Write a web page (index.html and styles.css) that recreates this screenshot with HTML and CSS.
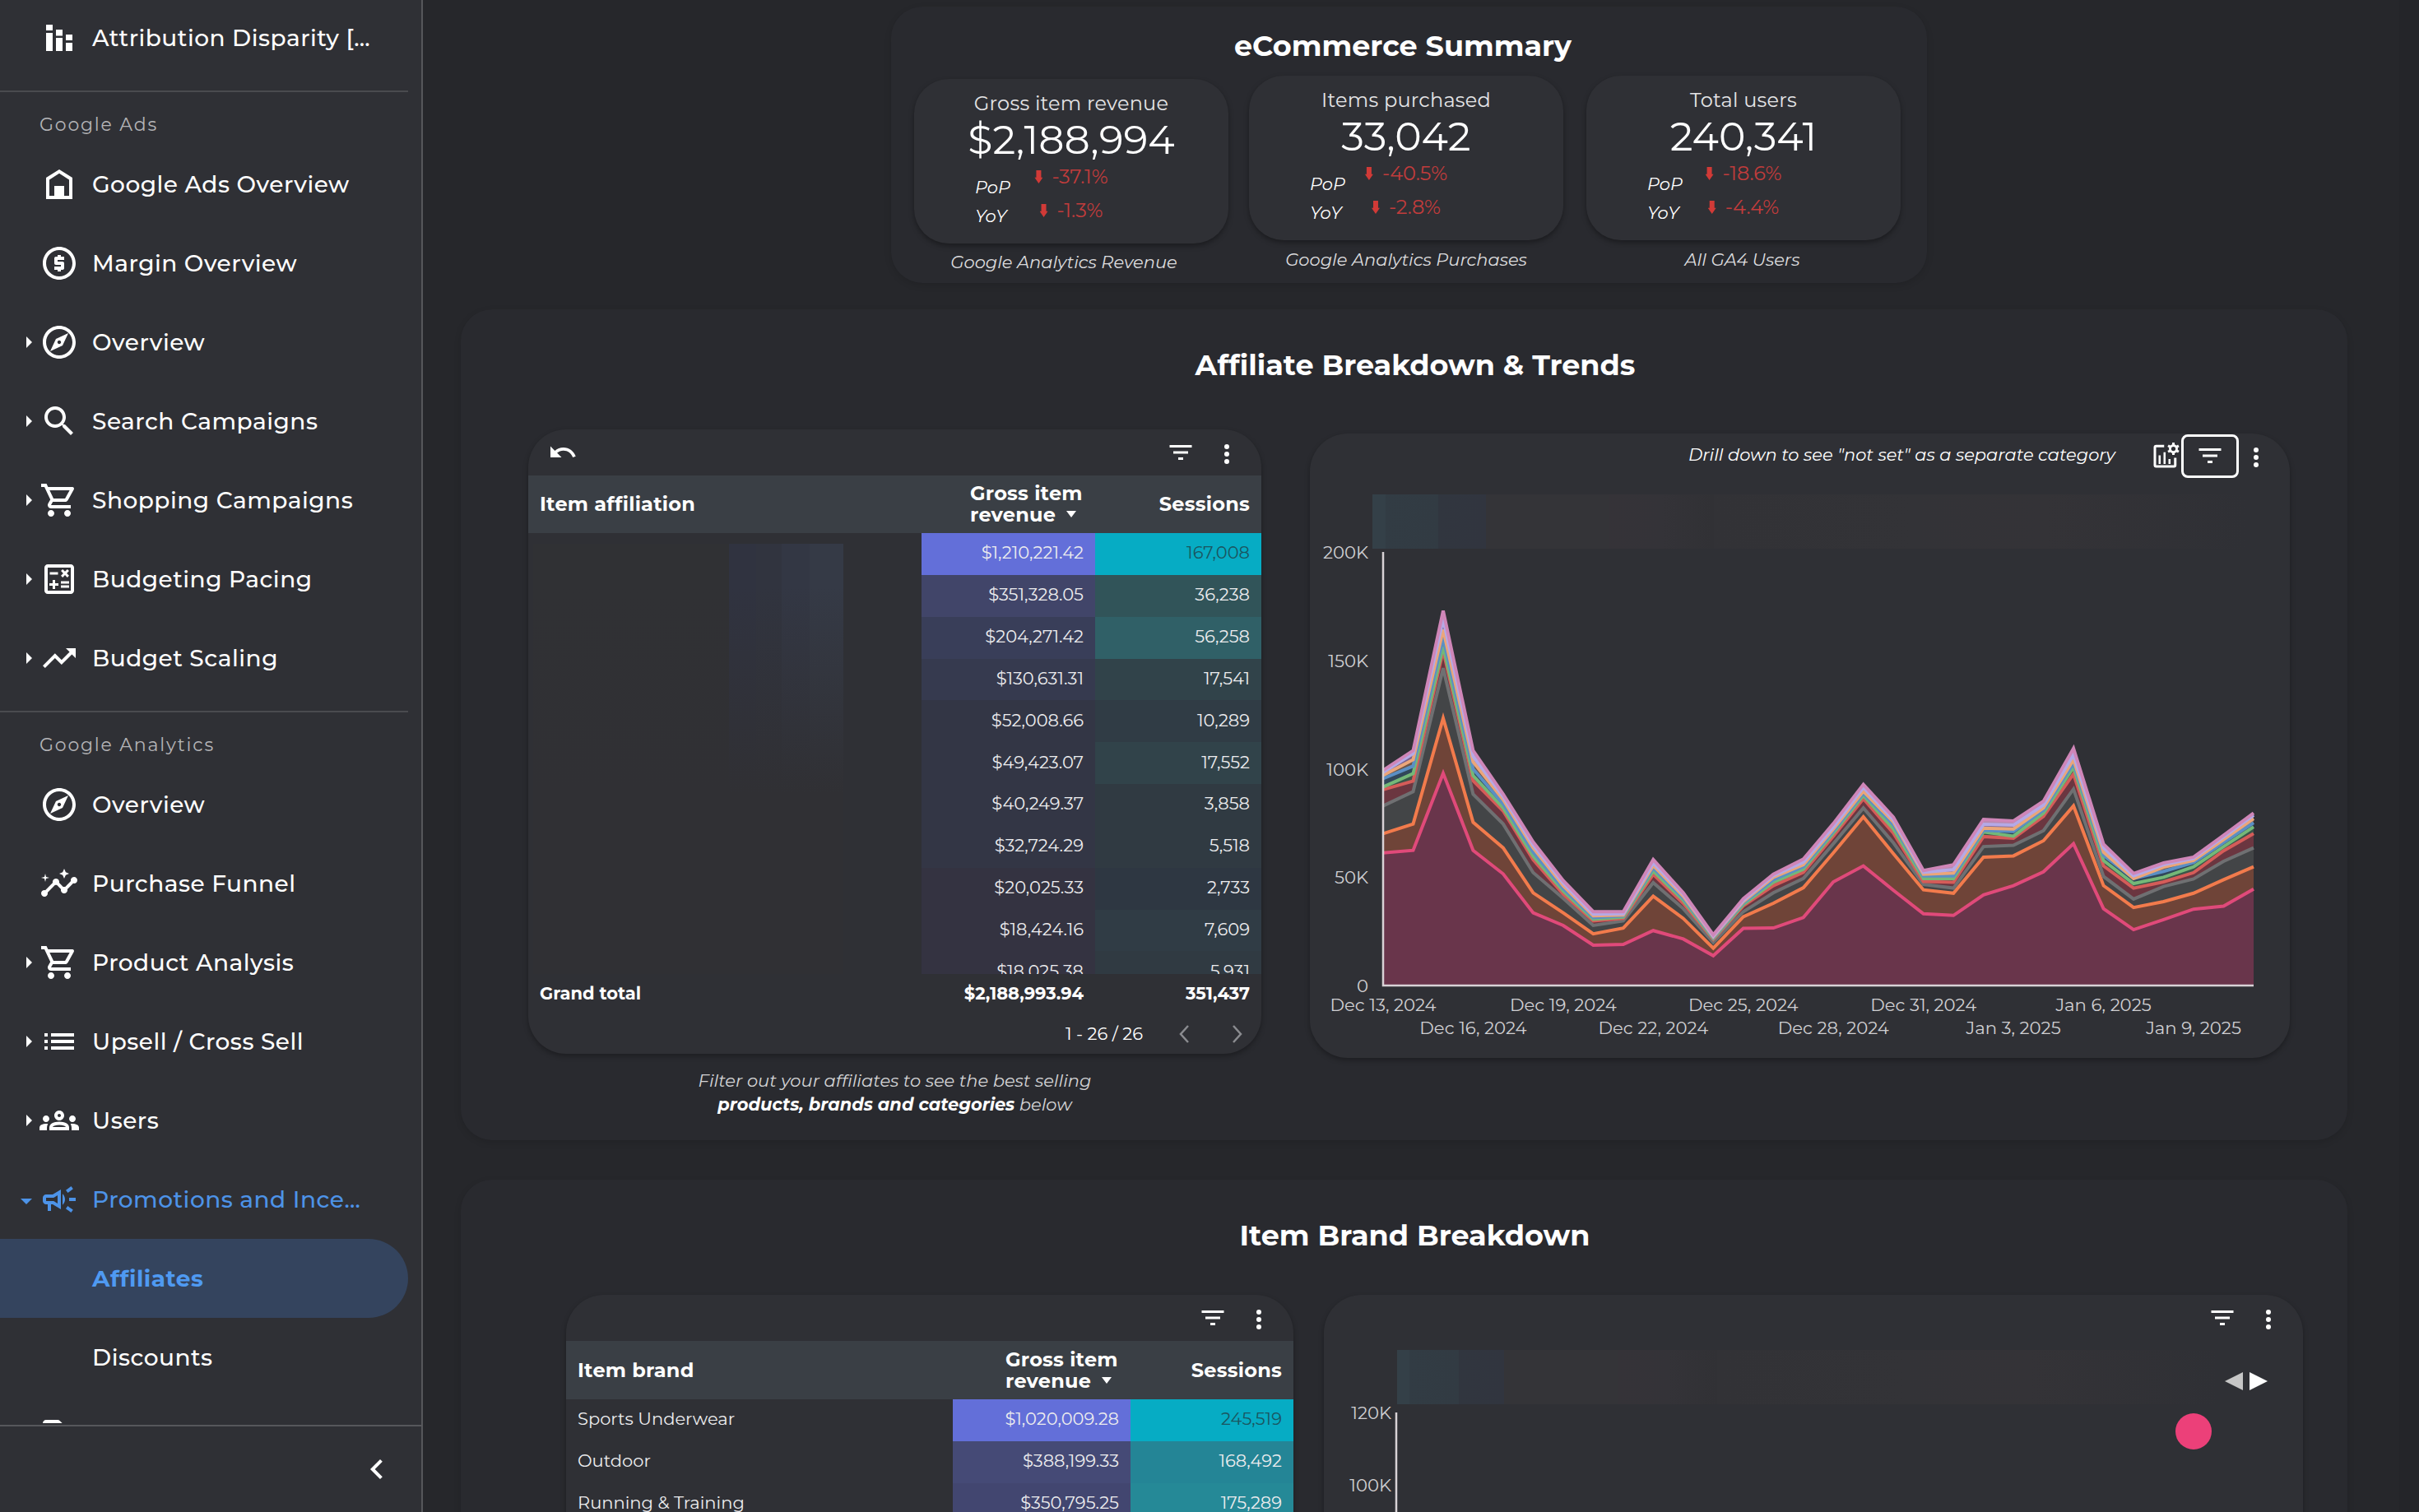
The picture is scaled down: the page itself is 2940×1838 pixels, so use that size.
FILE: index.html
```html
<!DOCTYPE html>
<html lang="en">
<head>
    <meta charset="UTF-8">
    <meta name="viewport" content="width=device-width, initial-scale=1.0">
    <title>Affiliates</title>
    <link rel="stylesheet" href="styles.css">
</head>
<body>

<!-- Icon set -->
<svg class="icon-defs">
    <symbol id="i-bars" viewBox="0 0 24 24"><path d="M4 4h4v3.500H4zM4 9h4v11H4zM10 7h4v3.700h-4zM10 12h4v8h-4zM16 10h4v3.500h-4zM16 15h4v5h-4z"/></symbol>
    <symbol id="i-home" viewBox="0 0 24 24"><path fill-rule="evenodd" d="M4 21V8l8-5 8 5v13H4zM6 19h3v-6h6v6h3V9.2l-6-3.8-6 3.8V19z"/></symbol>
    <symbol id="i-paid" viewBox="0 0 24 24"><path d="M12 2C6.48 2 2 6.48 2 12s4.48 10 10 10 10-4.48 10-10S17.52 2 12 2zm0 18c-4.41 0-8-3.59-8-8s3.59-8 8-8 8 3.59 8 8-3.59 8-8 8zM11 17h2v-1h1c.55 0 1-.45 1-1v-3c0-.55-.45-1-1-1h-3v-1h4V8h-2V7h-2v1h-1c-.55 0-1 .45-1 1v3c0 .55.45 1 1 1h3v1H9v2h2v1z"/></symbol>
    <symbol id="i-explore" viewBox="0 0 24 24"><path d="M12 2C6.48 2 2 6.48 2 12s4.48 10 10 10 10-4.48 10-10S17.52 2 12 2zm0 18c-4.41 0-8-3.59-8-8s3.59-8 8-8 8 3.59 8 8-3.59 8-8 8zm-5.5-2.5l7.51-3.49L17.5 6.5 9.99 9.99 6.5 17.5zm5.5-6.6c.61 0 1.1.49 1.1 1.1s-.49 1.1-1.1 1.1-1.1-.49-1.1-1.1.49-1.1 1.1-1.1z"/></symbol>
    <symbol id="i-search" viewBox="0 0 24 24"><path d="M15.5 14h-.79l-.28-.27C15.41 12.59 16 11.11 16 9.5 16 5.91 13.09 3 9.5 3S3 5.91 3 9.5 5.91 16 9.5 16c1.61 0 3.09-.59 4.23-1.57l.27.28v.79l5 4.99L20.49 19l-4.99-5zm-6 0C7.01 14 5 11.99 5 9.5S7.01 5 9.5 5 14 7.01 14 9.5 11.99 14 9.5 14z"/></symbol>
    <symbol id="i-cart" viewBox="0 0 24 24"><path d="M15.55 13c.75 0 1.41-.41 1.75-1.03l3.58-6.49c.37-.66-.11-1.48-.87-1.48H5.21l-.94-2H1v2h2l3.6 7.59-1.35 2.44C4.52 15.37 5.48 17 7 17h12v-2H7l1.1-2h7.45zM6.16 6h12.15l-2.76 5H8.53L6.16 6zM7 18c-1.1 0-1.99.9-1.99 2S5.9 22 7 22s2-.9 2-2-.9-2-2-2zm10 0c-1.1 0-1.99.9-1.99 2s.89 2 1.99 2 2-.9 2-2-.9-2-2-2z"/></symbol>
    <symbol id="i-calc" viewBox="0 0 24 24"><path d="M19 3H5c-1.1 0-2 .9-2 2v14c0 1.1.9 2 2 2h14c1.1 0 2-.9 2-2V5c0-1.1-.9-2-2-2zm0 16H5V5h14v14zM6.25 7.72h5v1.5h-5zM13 15.75h5v1.5h-5zM13 13.25h5v1.5h-5zM8 18h1.5v-2h2v-1.5h-2v-2H8v2H6V16h2zM14.09 10.95l1.41-1.41 1.41 1.41 1.06-1.06-1.41-1.42 1.41-1.41L16.91 6 15.5 7.41 14.09 6l-1.06 1.06 1.41 1.41-1.41 1.42z"/></symbol>
    <symbol id="i-trend" viewBox="0 0 24 24"><path d="M16 6l2.29 2.29-4.88 4.88-4-4L2 16.59 3.41 18l6-6 4 4 6.3-6.29L22 12V6z"/></symbol>
    <symbol id="i-insights" viewBox="0 0 24 24"><path d="M21 8c-1.45 0-2.26 1.44-1.93 2.51l-3.55 3.56c-.3-.09-.74-.09-1.04 0l-2.55-2.55C12.27 10.45 11.46 9 10 9c-1.45 0-2.27 1.44-1.93 2.52l-4.56 4.55C2.44 15.74 1 16.55 1 18c0 1.1.9 2 2 2 1.45 0 2.26-1.44 1.93-2.51l4.55-4.56c.3.09.74.09 1.04 0l2.55 2.55C12.73 16.55 13.54 18 15 18c1.45 0 2.27-1.44 1.93-2.52l3.56-3.55C21.56 12.26 23 11.45 23 10c0-1.1-.9-2-2-2zM15 9l.94-2.07L18 6l-2.06-.93L15 3l-.92 2.07L12 6l2.08.93zM3.5 11L4 9l2-.5L4 8l-.5-2L3 8l-2 .5L3 9z"/></symbol>
    <symbol id="i-list" viewBox="0 0 24 24"><path d="M3 13h2v-2H3v2zm0 4h2v-2H3v2zm0-8h2V7H3v2zm4 4h14v-2H7v2zm0 4h14v-2H7v2zM7 7v2h14V7H7z"/></symbol>
    <symbol id="i-groups" viewBox="0 0 24 24"><path d="M4 13c1.1 0 2-.9 2-2s-.9-2-2-2-2 .9-2 2 .9 2 2 2zm1.13 1.1c-.37-.06-.74-.1-1.13-.1-.99 0-1.93.21-2.78.58C.48 14.9 0 15.62 0 16.43V18h4.5v-1.61c0-.83.23-1.61.63-2.29zM20 13c1.1 0 2-.9 2-2s-.9-2-2-2-2 .9-2 2 .9 2 2 2zm4 3.43c0-.81-.48-1.53-1.22-1.85-.85-.37-1.79-.58-2.78-.58-.39 0-.76.04-1.13.1.4.68.63 1.46.63 2.29V18H24v-1.57zM16.24 13.65c-1.17-.52-2.61-.9-4.24-.9s-3.07.39-4.24.9C6.68 14.13 6 15.21 6 16.39V18h12v-1.61c0-1.18-.68-2.26-1.76-2.74zM8.07 16c.09-.23.13-.39.91-.69.97-.38 1.99-.56 3.02-.56s2.05.18 3.02.56c.77.3.81.46.91.69H8.07zM12 8c.55 0 1 .45 1 1s-.45 1-1 1-1-.45-1-1 .45-1 1-1m0-2c-1.66 0-3 1.34-3 3s1.34 3 3 3 3-1.34 3-3-1.34-3-3-3z"/></symbol>
    <symbol id="i-campaign" viewBox="0 0 24 24"><path d="M18 11v2h4v-2h-4zm-2 6.61c.96.71 2.21 1.65 3.2 2.39.4-.53.8-1.07 1.2-1.6-.99-.74-2.24-1.68-3.2-2.4-.4.54-.8 1.08-1.2 1.61zM20.4 5.6c-.4-.53-.8-1.07-1.2-1.6-.99.74-2.24 1.68-3.2 2.4.4.53.8 1.07 1.2 1.6.96-.72 2.21-1.65 3.2-2.4zM4 9c-1.1 0-2 .9-2 2v2c0 1.1.9 2 2 2h1v4h2v-4h1l5 3V6L8 9H4zm5.03 1.71L11 9.53v4.94l-1.97-1.18-.48-.29H4v-2h4.55l.48-.29zM15.5 12c0-1.33-.58-2.53-1.5-3.35v6.69c.92-.81 1.5-2.01 1.5-3.34z"/></symbol>
    <symbol id="i-tag" viewBox="0 0 24 24"><path d="M21.41 11.58l-9-9C12.05 2.22 11.55 2 11 2H4c-1.1 0-2 .9-2 2v7c0 .55.22 1.05.59 1.42l9 9c.36.36.86.58 1.41.58s1.05-.22 1.41-.59l7-7c.37-.36.59-.86.59-1.41s-.23-1.06-.59-1.42zM13 20.01L4 11V4h7v-.01l9 9-7 7.02z"/></symbol>
    <symbol id="i-chevron" viewBox="0 0 24 24"><path d="M15.41 7.41L14 6l-6 6 6 6 1.41-1.41L10.83 12z"/></symbol>
    <symbol id="i-undo" viewBox="0 0 24 24"><path d="M12.5 8c-2.65 0-5.05.99-6.9 2.6L2 7v9h9l-3.62-3.62c1.39-1.16 3.16-1.88 5.12-1.88 3.54 0 6.55 2.31 7.6 5.5l2.37-.78C21.08 11.03 17.15 8 12.5 8z"/></symbol>
    <symbol id="i-filter" viewBox="0 0 24 24"><path d="M10 18h4v-2h-4v2zM3 6v2h18V6H3zm3 7h12v-2H6v2z"/></symbol>
    <symbol id="i-more" viewBox="0 0 24 24"><circle cx="12" cy="6" r="2"/><circle cx="12" cy="12" r="2"/><circle cx="12" cy="18" r="2"/></symbol>
    <symbol id="i-chart-edit" viewBox="0 0 24 24">
        <path d="M11.500 3.500H5Q4 3.500 4 4.500v14.500q0 1 1 1h14.500q1 0 1-1V13" fill="none" stroke="currentColor" stroke-width="2"/>
        <path d="M7 11h1.700v7H7zM11 8.500h1.700V18H11zM15 14h1.700v4H15z"/>
        <circle cx="19" cy="5.700" r="2.700" fill="none" stroke="currentColor" stroke-width="1.900"/>
        <path d="M19 .7v10M14.700 3.200l8.600 5M14.700 8.200l8.600-5" fill="none" stroke="currentColor" stroke-width="2" stroke-dasharray="1.800 6.300 1.800"/>
    </symbol>
</svg>

<div class="layout">
    <aside class="sidebar">
        <nav class="nav">
            <a class="nav-item"><span class="caret"></span><svg class="icon"><use href="#i-bars"/></svg><span>Attribution Disparity […</span></a>

            <div class="nav-section">Google Ads</div>
            <a class="nav-item"><span class="caret"></span><svg class="icon"><use href="#i-home"/></svg><span>Google Ads Overview</span></a>
            <a class="nav-item"><span class="caret"></span><svg class="icon"><use href="#i-paid"/></svg><span>Margin Overview</span></a>
            <a class="nav-item"><span class="caret closed"></span><svg class="icon"><use href="#i-explore"/></svg><span>Overview</span></a>
            <a class="nav-item"><span class="caret closed"></span><svg class="icon"><use href="#i-search"/></svg><span>Search Campaigns</span></a>
            <a class="nav-item"><span class="caret closed"></span><svg class="icon"><use href="#i-cart"/></svg><span>Shopping Campaigns</span></a>
            <a class="nav-item"><span class="caret closed"></span><svg class="icon"><use href="#i-calc"/></svg><span>Budgeting Pacing</span></a>
            <a class="nav-item"><span class="caret closed"></span><svg class="icon"><use href="#i-trend"/></svg><span>Budget Scaling</span></a>

            <div class="nav-section">Google Analytics</div>
            <a class="nav-item"><span class="caret"></span><svg class="icon"><use href="#i-explore"/></svg><span>Overview</span></a>
            <a class="nav-item"><span class="caret"></span><svg class="icon"><use href="#i-insights"/></svg><span>Purchase Funnel</span></a>
            <a class="nav-item"><span class="caret closed"></span><svg class="icon"><use href="#i-cart"/></svg><span>Product Analysis</span></a>
            <a class="nav-item"><span class="caret closed"></span><svg class="icon"><use href="#i-list"/></svg><span>Upsell / Cross Sell</span></a>
            <a class="nav-item"><span class="caret closed"></span><svg class="icon"><use href="#i-groups"/></svg><span>Users</span></a>
            <a class="nav-item open"><span class="caret opened"></span><svg class="icon"><use href="#i-campaign"/></svg><span>Promotions and Ince…</span></a>
            <a class="nav-item sub active"><span>Affiliates</span></a>
            <a class="nav-item sub"><span>Discounts</span></a>
            <a class="nav-item"><span class="caret"></span><svg class="icon"><use href="#i-tag"/></svg></a>
        </nav>
        <div class="sidebar-footer">
            <svg class="icon"><use href="#i-chevron"/></svg>
        </div>
    </aside>

    <main class="report">
        <!-- eCommerce summary -->
        <section class="panel summary">
            <h2>eCommerce Summary</h2>
            <div class="kpis">
                <div class="kpi-col first">
                    <div class="kpi">
                        <div class="kpi-label">Gross item revenue</div>
                        <div class="kpi-value">$2,188,994</div>
                        <div class="compare">
                            <div class="periods"><i>PoP</i><i>YoY</i></div>
                            <div class="deltas"><span><b class="down"></b>-37.1%</span><span><b class="down"></b>-1.3%</span></div>
                        </div>
                    </div>
                    <div class="kpi-note">Google Analytics Revenue</div>
                </div>
                <div class="kpi-col">
                    <div class="kpi">
                        <div class="kpi-label">Items purchased</div>
                        <div class="kpi-value">33,042</div>
                        <div class="compare">
                            <div class="periods"><i>PoP</i><i>YoY</i></div>
                            <div class="deltas"><span><b class="down"></b>-40.5%</span><span><b class="down"></b>-2.8%</span></div>
                        </div>
                    </div>
                    <div class="kpi-note">Google Analytics Purchases</div>
                </div>
                <div class="kpi-col last">
                    <div class="kpi">
                        <div class="kpi-label">Total users</div>
                        <div class="kpi-value">240,341</div>
                        <div class="compare">
                            <div class="periods"><i>PoP</i><i>YoY</i></div>
                            <div class="deltas"><span><b class="down"></b>-18.6%</span><span><b class="down"></b>-4.4%</span></div>
                        </div>
                    </div>
                    <div class="kpi-note">All GA4 Users</div>
                </div>
            </div>
        </section>

        <!-- Affiliates -->
        <section class="panel affiliates">
            <h2>Affiliate Breakdown &amp; Trends</h2>
            <div class="panel-row">
                <div class="table-col">
                    <div class="card table-card">
                        <div class="toolbar">
                            <svg class="tool"><use href="#i-undo"/></svg>
                            <span class="spacer"></span>
                            <svg class="tool"><use href="#i-filter"/></svg>
                            <svg class="tool more"><use href="#i-more"/></svg>
                        </div>
                        <div class="row head">
                            <div>Item affiliation</div>
                            <div class="num"><span class="sorted">Gross item<br>revenue<b class="sort"></b></span></div>
                            <div class="num">Sessions</div>
                        </div>
                        <div class="rows">
                            <div class="row"><div></div><div class="num g1">$1,210,221.42</div><div class="num s1">167,008</div></div>
                            <div class="row"><div></div><div class="num g2">$351,328.05</div><div class="num s2">36,238</div></div>
                            <div class="row"><div></div><div class="num g3">$204,271.42</div><div class="num s3">56,258</div></div>
                            <div class="row"><div></div><div class="num g4">$130,631.31</div><div class="num s4">17,541</div></div>
                            <div class="row"><div></div><div class="num g5">$52,008.66</div><div class="num s5">10,289</div></div>
                            <div class="row"><div></div><div class="num g5">$49,423.07</div><div class="num s4">17,552</div></div>
                            <div class="row"><div></div><div class="num g5">$40,249.37</div><div class="num s6">3,858</div></div>
                            <div class="row"><div></div><div class="num g5">$32,724.29</div><div class="num s6">5,518</div></div>
                            <div class="row"><div></div><div class="num g6">$20,025.33</div><div class="num s7">2,733</div></div>
                            <div class="row"><div></div><div class="num g6">$18,424.16</div><div class="num s5">7,609</div></div>
                            <div class="row"><div></div><div class="num g6">$18,025.38</div><div class="num s6">5,931</div></div>
                            <div class="mosaic"></div>
                        </div>
                        <div class="row total">
                            <div>Grand total</div>
                            <div class="num">$2,188,993.94</div>
                            <div class="num">351,437</div>
                        </div>
                        <div class="pager">
                            <span>1 - 26 / 26</span>
                            <svg class="page-arrow" viewBox="0 0 14 24"><path d="M12 2L3 12l9 10"/></svg>
                            <svg class="page-arrow" viewBox="0 0 14 24"><path d="M2 2l9 10-9 10"/></svg>
                        </div>
                    </div>
                    <p class="hint">Filter out your affiliates to see the best selling<br><b>products, brands and categories</b> below</p>
                </div>

                <div class="card chart-card">
                    <div class="toolbar chart-toolbar">
                        <span class="drill">Drill down to see "not set" as a separate category</span>
                        <svg class="tool"><use href="#i-chart-edit"/></svg>
                        <span class="focus-box"><svg class="tool"><use href="#i-filter"/></svg></span>
                        <svg class="tool more"><use href="#i-more"/></svg>
                    </div>
                    <div class="legend-strip"></div>
                    <svg class="chart" id="trend" viewBox="0 0 1191 620"></svg>
                </div>
            </div>
        </section>

        <!-- Brands -->
        <section class="panel brands">
            <h2>Item Brand Breakdown</h2>
            <div class="panel-row">
                <div class="card table-card">
                    <div class="toolbar">
                        <span class="spacer"></span>
                        <svg class="tool"><use href="#i-filter"/></svg>
                        <svg class="tool more"><use href="#i-more"/></svg>
                    </div>
                    <div class="row head">
                        <div>Item brand</div>
                        <div class="num"><span class="sorted">Gross item<br>revenue<b class="sort"></b></span></div>
                        <div class="num">Sessions</div>
                    </div>
                    <div class="row"><div>Sports Underwear</div><div class="num g1">$1,020,009.28</div><div class="num s1">245,519</div></div>
                    <div class="row"><div>Outdoor</div><div class="num b2">$388,199.33</div><div class="num t2">168,492</div></div>
                    <div class="row"><div>Running &amp; Training</div><div class="num b3">$350,795.25</div><div class="num t3">175,289</div></div>
                </div>
                <div class="card chart-card">
                    <div class="toolbar">
                        <span class="spacer"></span>
                        <svg class="tool"><use href="#i-filter"/></svg>
                        <svg class="tool more"><use href="#i-more"/></svg>
                    </div>
                    <div class="legend-row">
                        <div class="legend-strip"></div>
                        <svg class="legend-nav" viewBox="0 0 52 22"><path class="prev" d="M22 0v22L0 11z"/><path d="M30 0v22l22-11z"/></svg>
                    </div>
                    <svg class="bubble" viewBox="0 0 1190 200">
                        <path class="axis" d="M88 10V200"/>
                        <text x="82" y="18" text-anchor="end">120K</text>
                        <text x="82" y="106" text-anchor="end">100K</text>
                        <circle cx="1057" cy="33" r="22" fill="#ec4079"/>
                    </svg>
                </div>
            </div>
        </section>
    </main>
    <div class="scroll-track"></div>
</div>

<script src="chart.js"></script>
</body>
</html>
```
FILE: styles.css
```css
* {
    box-sizing: border-box;
}

body {
    margin: 0;
    background-color: #26272b;
    color: #fff;
    font-family: "Montserrat", "Inter", sans-serif;
    font-size: 21px;
}

.icon-defs {
    display: none;
}

svg {
    fill: currentColor;
    flex: none;
}

.layout {
    display: flex;
    height: 1838px;
    overflow: hidden;
}

/* Sidebar */
.sidebar {
    width: 514px;
    flex: none;
    display: flex;
    flex-direction: column;
    background-color: #2f3035;
    border-right: 2px solid #56575b;
}

.nav {
    height: 1730px;
    overflow: hidden;
}

.nav-item {
    display: flex;
    align-items: center;
    height: 96px;
    width: 496px;
    font-size: 28px;
    font-weight: 500;
    letter-spacing: 0.5px;
    white-space: nowrap;
}

.nav-item:first-child {
    margin-top: -2px;
}

.nav-item .icon {
    margin-right: 16px;
}

.icon {
    width: 48px;
    height: 48px;
}

.nav-item.sub {
    padding-left: 112px;
}

.nav-item.open {
    color: #4d93e8;
}

.nav-item.active {
    background-color: #34445e;
    border-radius: 0 48px 48px 0;
    color: #4f9af2;
    font-weight: 700;
}

.nav-section {
    width: 496px;
    height: 66px;
    margin-top: 16px;
    padding: 26px 0 0 48px;
    border-top: 2px solid #4a4b4f;
    color: #b4b4b7;
    font-size: 22px;
    line-height: 28px;
    letter-spacing: 1.8px;
}

.caret {
    width: 48px;
    padding-left: 32px;
}

.caret.closed::before {
    content: "";
    display: block;
    width: 0;
    border: solid transparent;
    border-width: 7px 0 7px 7px;
    border-left-color: #fff;
}

.caret.opened {
    padding-left: 25px;
}

.caret.opened::before {
    content: "";
    display: block;
    width: 0;
    margin-top: 5px;
    border: solid transparent;
    border-width: 7px 7px 0 7px;
    border-top-color: #4d93e8;
}

.sidebar-footer {
    flex: 1;
    display: flex;
    align-items: center;
    justify-content: flex-end;
    margin-top: 2px;
    padding-right: 30px;
    border-top: 2px solid #56575b;
}

/* Report area */
.report {
    flex: 1;
    padding: 8px 63px 0 46px;
}

.scroll-track {
    width: 24px;
    background-color: #242529;
}

.panel {
    background-color: #292a2f;
    border-radius: 38px;
    box-shadow: 0 3px 8px rgba(0, 0, 0, 0.12);
}

.panel h2 {
    margin: 0;
    font-size: 35px;
    line-height: 48px;
    font-weight: 700;
    text-align: center;
}

.summary {
    width: 1259px;
    height: 336px;
    margin-left: 523px;
    padding: 24px 31px 0 28px;
}

.summary h2 {
    padding-right: 12px;
}

.kpis {
    display: flex;
    gap: 25px;
    margin-top: 12px;
}

.kpi-col {
    width: 382px;
}

.kpi-col.first {
    margin-top: 4px;
}

.kpi-col.last {
    margin-left: 3px;
}

.kpi {
    height: 200px;
    padding-top: 15px;
    background-color: #2f3035;
    border-radius: 42px;
    box-shadow: 0 3px 6px rgba(0, 0, 0, 0.35);
}

.kpi-label {
    color: #e4e4e6;
    font-size: 24px;
    line-height: 29px;
    text-align: center;
    letter-spacing: 0.25px;
}

.kpi-value {
    font-size: 49px;
    line-height: 60px;
    font-weight: 400;
    text-align: center;
}

.compare {
    display: grid;
    grid-template-columns: 1fr auto 1fr;
}

.periods {
    display: flex;
    flex-direction: column;
    padding: 10px 0 0 74px;
    font-size: 21px;
    line-height: 35px;
}

.deltas {
    display: flex;
    flex-direction: column;
    align-items: center;
    margin-top: -6px;
    color: #c13c3c;
    font-size: 24px;
    line-height: 41px;
}

.down {
    display: inline-block;
    width: 10px;
    height: 16px;
    margin-right: 11px;
    background-color: #d13a37;
    clip-path: polygon(20% 0, 80% 0, 80% 55%, 100% 55%, 50% 100%, 0 55%, 20% 55%);
}

.kpi-note {
    margin-top: 10px;
    color: #dcdcde;
    font-size: 21px;
    line-height: 28px;
    font-style: italic;
    text-align: center;
}

.first .kpi-note {
    margin-top: 9px;
    padding-right: 18px;
}

.last .kpi-note {
    padding-right: 3px;
}

.affiliates {
    height: 1010px;
    margin-top: 32px;
    padding: 44px 70px 0 82px;
}

.brands {
    height: 600px;
    margin-top: 48px;
    padding: 44px 54px 0 128px;
}

.affiliates h2 {
    padding-left: 15px;
}

.brands h2 {
    padding-right: 48px;
}

.panel-row {
    display: flex;
    justify-content: space-between;
    align-items: flex-start;
}

.affiliates .panel-row {
    margin-top: 54px;
}

.brands .panel-row {
    margin-top: 48px;
}

.card {
    background-color: #2f3035;
    border-radius: 46px;
    box-shadow: 0 3px 6px rgba(0, 0, 0, 0.3);
}

.toolbar {
    display: flex;
    align-items: center;
    gap: 20px;
    height: 56px;
    padding: 0 24px;
}

.tool {
    width: 36px;
    height: 36px;
}

.tool.more {
    margin-top: 3px;
}

.spacer {
    flex: 1;
}

/* Tables */
.table-card {
    width: 891px;
}

.affiliates .table-card {
    height: 759px;
}

.brands .table-card {
    width: 884px;
    height: 500px;
}

.row {
    display: grid;
    grid-template-columns: 1fr 211px 202px;
    height: 50.85px;
}

.brands .row {
    grid-template-columns: 1fr 216px 198px;
}

.row > div {
    display: flex;
    align-items: center;
    padding: 0 14px 3px;
    color: #ececee;
    white-space: nowrap;
}

.row > .num {
    justify-content: flex-end;
}

.row.head {
    height: 70px;
    background-color: #3a3f45;
}

.row.head > div {
    padding-bottom: 0;
    color: #fff;
    font-size: 24px;
    line-height: 26px;
    font-weight: 700;
    letter-spacing: 0.25px;
}

.brands .row.head {
    height: 71px;
}

.sorted {
    width: 138px;
}

.sort {
    display: inline-block;
    margin-left: 13px;
    border: solid transparent;
    border-width: 8px 6px 0 6px;
    border-top-color: #fff;
    vertical-align: 5px;
}

.rows {
    position: relative;
    height: 536px;
    overflow: hidden;
}

/* Pixelated block over the affiliation names */
.mosaic {
    position: absolute;
    left: 6px;
    top: 13px;
    width: 377px;
    height: 523px;
    background:
        linear-gradient(rgba(48, 48, 52, 0) 10%, #303034 58%),
        linear-gradient(90deg, #303134 63%, #303340 63%, #303340 72%, #31343f 72%, #31343f 80%, #333744 80%, #333744 89%, #353a46 89%);
}

.row.total > div {
    padding-bottom: 4px;
    color: #fff;
    font-weight: 700;
}

.pager {
    display: flex;
    align-items: center;
    justify-content: flex-end;
    height: 44px;
    padding: 0 22px 0 0;
}

.page-arrow {
    width: 14px;
    height: 24px;
    margin-left: 43px;
    fill: none;
    stroke: #8b8c90;
    stroke-width: 2.5;
}

.page-arrow + .page-arrow {
    margin-left: 51px;
}

.g1 { background-color: #636fd9; }
.g2 { background-color: #414569; }
.g3 { background-color: #393e59; }
.g4 { background-color: #363a4f; }
.g5 { background-color: #333645; }
.g6 { background-color: #343341; }
.b2 { background-color: #454a76; }
.b3 { background-color: #424670; }
.s1 { background-color: #06acc4; }
.s2 { background-color: #315459; }
.s3 { background-color: #306067; }
.s4 { background-color: #31434a; }
.s5 { background-color: #303c45; }
.s6 { background-color: #303a42; }
.s7 { background-color: #2e3742; }
.t2 { background-color: #248596; }
.t3 { background-color: #258997; }

.row > .s1 {
    color: #1b5560;
}

.hint {
    margin: 18px 0 0;
    color: #d4d4d6;
    line-height: 29px;
    font-style: italic;
    text-align: center;
}

.hint b {
    color: #fff;
}

/* Charts */
.chart-card {
    width: 1191px;
    height: 759px;
}

.brands .chart-card {
    width: 1190px;
}

.affiliates .chart-card {
    margin-top: 5px;
}

.chart-toolbar {
    gap: 0;
    justify-content: flex-end;
    padding-right: 23px;
}

.chart-toolbar .drill {
    margin: -5px 42px 0 0;
    font-style: italic;
}

.chart-toolbar > .more {
    margin-left: 3px;
    margin-top: 2px;
}

.focus-box {
    display: flex;
    align-items: center;
    justify-content: center;
    width: 70px;
    height: 53px;
    margin: -2px 0 0 2px;
    border: 3px solid #fff;
    border-radius: 8px;
}

.legend-strip {
    width: 1063px;
    height: 66px;
    margin: 18px 0 0 76px;
    background: linear-gradient(90deg, #344048 1.500%, #323c44 1.500%, #323b43 7.500%, #31363f 7.500%, #31353f 13%, #343438 13%, #343438 27%, #353338 27%, #343338 33%, #313135 39%, #323236 39%, #333337 62%, #343337 77%, #2f3035);
}

.chart {
    display: block;
    width: 1191px;
    height: 620px;
    overflow: visible;
}

.chart text,
.bubble text {
    fill: #cfcfd2;
    font-size: 21.2px;
}

.axis {
    fill: none;
    stroke: #d8d2d6;
    stroke-width: 2.5;
}

.legend-row {
    display: flex;
    align-items: center;
}

.legend-row .legend-strip {
    width: 998px;
    margin: 11px 0 0 89px;
}

.legend-nav {
    width: 52px;
    height: 22px;
    margin: 20px 0 0 8px;
}

.legend-nav .prev {
    fill: #c6c6c6;
}

.bubble {
    display: block;
    width: 1190px;
    height: 200px;
}
```
FILE: chart.js
```javascript
// Stacked area chart: sessions per day, cumulative levels listed bottom to top
const W = 1058, H = 527, LEFT = 89, TOP = 4, FLOOR = 1368, RANGE = 1033;

const series = [
    { line: "#e04a7a", fill: "#69354b", y: [1052,1046,862,1046,1102,1195,1225,1272,1270,1237,1257,1297,1232,1231,1206,1121,1083,1141,1197,1201,1152,1130,1097,1030,1185,1235,1211,1186,1179,1138] },
    { line: "#f27b4c", fill: "#6f4438", y: [1006,983,731,979,1040,1147,1195,1245,1231,1155,1208,1279,1204,1172,1135,1052,966,1054,1140,1148,1062,1059,1023,940,1130,1182,1168,1148,1116,1085] },
    { line: "#6f7072", fill: "#434547", y: [940,906,612,912,983,1099,1160,1225,1214,1123,1185,1265,1192,1147,1113,1030,945,1028,1127,1136,1037,1034,999,900,1108,1162,1132,1114,1072,1040] },
    { line: "#d55c59", fill: "#6b3640", y: [901,881,570,880,952,1068,1150,1214,1208,1103,1172,1258,1178,1130,1098,1012,923,1005,1120,1122,1013,1017,965,864,1083,1136,1121,1099,1047,1006] },
    { line: "#74b878", fill: "#3a5549", y: [895,863,560,868,945,1060,1143,1210,1205,1095,1165,1256,1175,1122,1091,1005,915,995,1113,1113,1002,1012,957,848,1070,1125,1110,1085,1037,990] },
    { line: "#5b8fc4", fill: "#31475a", y: [875,845,540,852,935,1050,1137,1206,1202,1088,1160,1254,1171,1116,1085,1000,910,985,1107,1107,998,1001,950,838,1058,1113,1096,1075,1027,980] },
    { line: "#eba67a", fill: "#6d5548", y: [867,830,520,835,925,1040,1130,1202,1200,1082,1155,1252,1168,1110,1080,995,905,978,1103,1100,993,995,945,830,1050,1113,1086,1070,1020,970] },
    { line: "#b5a9e6", fill: "#77608e", y: [860,815,495,822,918,1033,1124,1198,1197,1076,1150,1250,1165,1106,1074,990,896,973,1098,1092,984,986,938,818,1040,1107,1080,1065,1014,962] },
    { line: "#cf86b8", fill: "#b98ab0", y: [855,808,475,808,912,1026,1118,1192,1192,1068,1147,1247,1161,1103,1067,982,889,967,1094,1080,972,976,929,803,1031,1101,1076,1062,1010,957] }
];

const labels = ["Dec 13, 2024", "Dec 16, 2024", "Dec 19, 2024", "Dec 22, 2024", "Dec 25, 2024",
    "Dec 28, 2024", "Dec 31, 2024", "Jan 3, 2025", "Jan 6, 2025", "Jan 9, 2025"];

const px = i => LEFT + i * W / 29;
const py = v => TOP + H - (FLOOR - v) / RANGE * H;

let out = "";
const points = series.map(s => s.y.map((v, i) => px(i).toFixed(1) + "," + py(v).toFixed(1)).join(" "));

// top band first, so that every lower band covers it
for (let n = series.length - 1; n >= 0; n--) {
    out += `<polygon points="${LEFT},${TOP + H} ${points[n]} ${LEFT + W},${TOP + H}" fill="${series[n].fill}"/>`;
}
for (let n = 0; n < series.length; n++) {
    out += `<polyline points="${points[n]}" fill="none" stroke="${series[n].line}" stroke-width="4"/>`;
}

out += `<path class="axis" d="M${LEFT} ${TOP}V${TOP + H}H${LEFT + W}"/>`;

["200K", "150K", "100K", "50K", "0"].forEach((t, i) => {
    out += `<text x="71" y="${TOP + 8 + i * H / 4}" text-anchor="end">${t}</text>`;
});
labels.forEach((t, i) => {
    out += `<text x="${px(i * 3)}" y="${TOP + H + (i % 2 ? 59 : 31)}" text-anchor="middle">${t}</text>`;
});

document.getElementById("trend").innerHTML = out;
```
